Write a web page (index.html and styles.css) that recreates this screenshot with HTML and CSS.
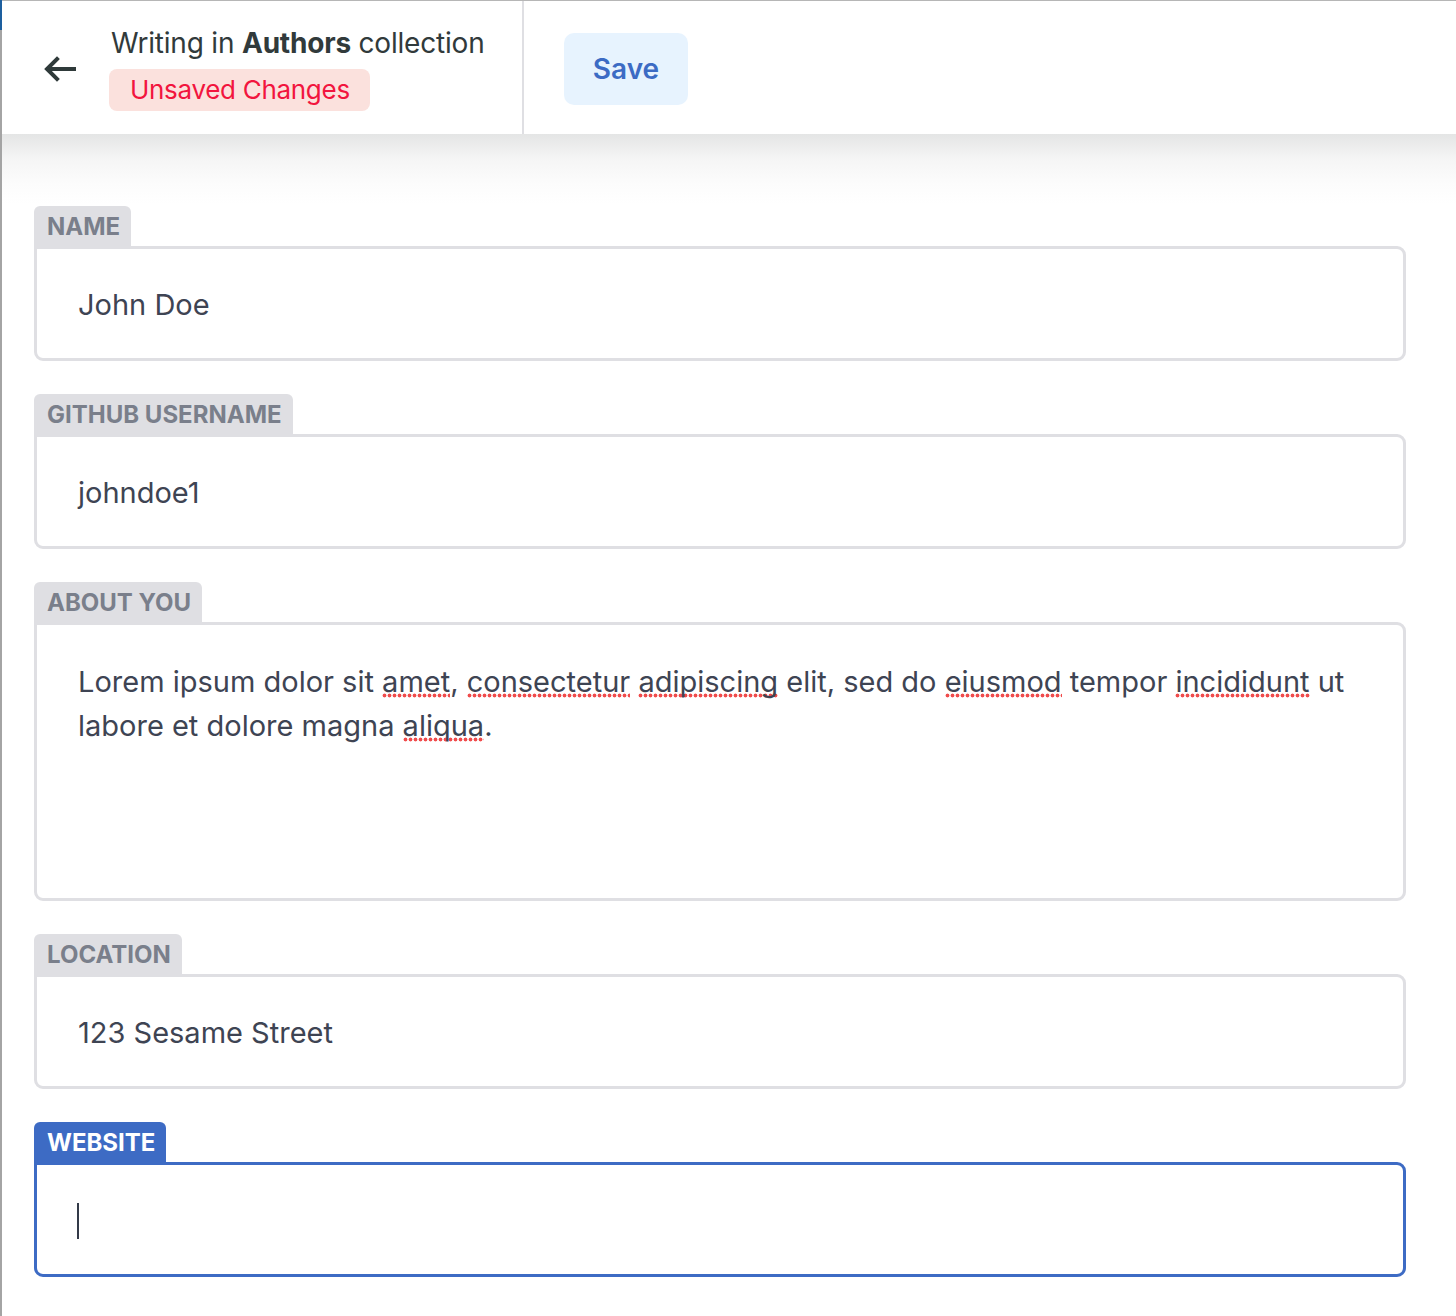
FILE: index.html
```html
<!DOCTYPE html>
<html lang="en">
<head>
<meta charset="utf-8">
<title>Writing in Authors collection</title>
<link rel="stylesheet" href="styles.css">
</head>
<body>
<div class="frame">
  <header class="topbar">
    <div class="topbar-left">
      <button class="back" aria-label="Back">
        <svg width="34" height="28" viewBox="0 0 34 28" fill="none" stroke="#2f3a3a" stroke-width="4" stroke-linecap="square" stroke-linejoin="miter">
          <path d="M31 14H5"/>
          <path d="M14 4L4 14L14 24"/>
        </svg>
      </button>
      <div class="title-block">
        <div class="title">Writing in <strong>Authors</strong> collection</div>
        <span class="badge">Unsaved Changes</span>
      </div>
    </div>
    <div class="topbar-right">
      <button class="save">Save</button>
    </div>
  </header>
  <main class="content">
    <div class="field">
      <div class="tab">Name</div>
      <div class="input">John Doe</div>
    </div>
    <div class="field">
      <div class="tab">Github Username</div>
      <div class="input">johndoe1</div>
    </div>
    <div class="field">
      <div class="tab">About You</div>
      <div class="input textarea">Lorem ipsum dolor sit <span class="sp">amet</span>, <span class="sp">consectetur</span> <span class="sp">adipiscing</span> elit, sed do <span class="sp">eiusmod</span> tempor <span class="sp">incididunt</span> ut labore et dolore magna <span class="sp">aliqua</span>.</div>
    </div>
    <div class="field">
      <div class="tab">Location</div>
      <div class="input">123 Sesame Street</div>
    </div>
    <div class="field focused">
      <div class="tab">Website</div>
      <div class="input"><span class="caret"></span></div>
    </div>
  </main>
</div>
</body>
</html>
```
FILE: styles.css
```css
* { box-sizing: border-box; }
html, body { margin: 0; padding: 0; background: #fff; }
body {
  font-family: Inter, "Liberation Sans", sans-serif;
  color: #3e4453;
}
.frame {
  position: relative;
  min-height: 1316px;
  border-top: 1px solid #b6b6b6;
  border-left: 2px solid #a4a4a4;
}
.frame::before {
  content: "";
  position: absolute;
  left: -2px;
  top: -1px;
  width: 2px;
  height: 30px;
  background: #1d5f9f;
}
.topbar {
  display: flex;
  height: 133px;
  background: #fff;
  position: relative;
  z-index: 1;
}
.topbar-left {
  width: 522px;
  display: flex;
  align-items: center;
  border-right: 2px solid #dfdfe3;
  padding-left: 41px;
}
.back {
  border: 0;
  background: none;
  padding: 0;
  margin: 2px 34px 0 0;
  width: 34px;
  height: 28px;
  display: flex;
}
.title-block {
  display: flex;
  flex-direction: column;
  align-items: flex-start;
  gap: 9px;
  padding-top: 2px;
}
.title {
  font-size: 28px;
  line-height: 34px;
  color: #313a3b;
  letter-spacing: -0.2px;
}
.title strong { font-weight: 700; }
.badge {
  display: inline-block;
  height: 42px;
  line-height: 42px;
  padding: 0 20px 0 21px;
  background: #fbe1dd;
  color: #f2153e;
  font-size: 26px;
  border-radius: 8px;
  margin-left: -2px;
  letter-spacing: -0.3px;
}
.topbar-right {
  display: flex;
  align-items: center;
  padding-left: 40px;
  padding-top: 2px;
}
.save {
  width: 124px;
  height: 72px;
  border: 0;
  border-radius: 10px;
  background: #e7f3fe;
  color: #3c6bc4;
  font-family: Inter, "Liberation Sans", sans-serif;
  font-size: 28px;
  font-weight: 600;
  padding: 0;
}
.content {
  padding: 72px 50px 40px 32px;
  display: flex;
  flex-direction: column;
  gap: 33px;
  background: linear-gradient(#e4e5e5 0px, #f5f5f5 25px, #fcfcfc 50px, #ffffff 70px);
}
.field {
  display: flex;
  flex-direction: column;
  align-items: flex-start;
}
.tab {
  height: 40px;
  line-height: 42px;
  padding: 0 11px 0 13px;
  background: #dfdfe3;
  color: #7a7f8b;
  font-size: 24px;
  font-weight: 700;
  text-transform: uppercase;
  border-radius: 6px 6px 0 0;
}
.input {
  width: 100%;
  height: 115px;
  border: 3px solid #dfdfe3;
  border-radius: 0 9px 9px 9px;
  background: #fff;
  display: flex;
  align-items: center;
  padding: 2px 40px 0 41px;
  font-size: 29px;
  color: #3e4453;
}
.textarea {
  display: block;
  height: 279px;
  padding-top: 35px;
  line-height: 44px;
}
.sp {
  background-image: radial-gradient(circle at 2.5px 2.5px, #f04c4c 1.5px, rgba(240, 76, 76, 0) 2.3px);
  background-size: 5px 5px;
  background-repeat: repeat-x;
  background-position: 0 calc(100% - 1px);
}
.focused .tab {
  background: #3d6bc4;
  color: #fff;
}
.focused .input {
  border-color: #3d6bc4;
}
.caret {
  display: block;
  width: 2px;
  height: 36px;
  background: #333a48;
  margin-left: -1px;
}
```
